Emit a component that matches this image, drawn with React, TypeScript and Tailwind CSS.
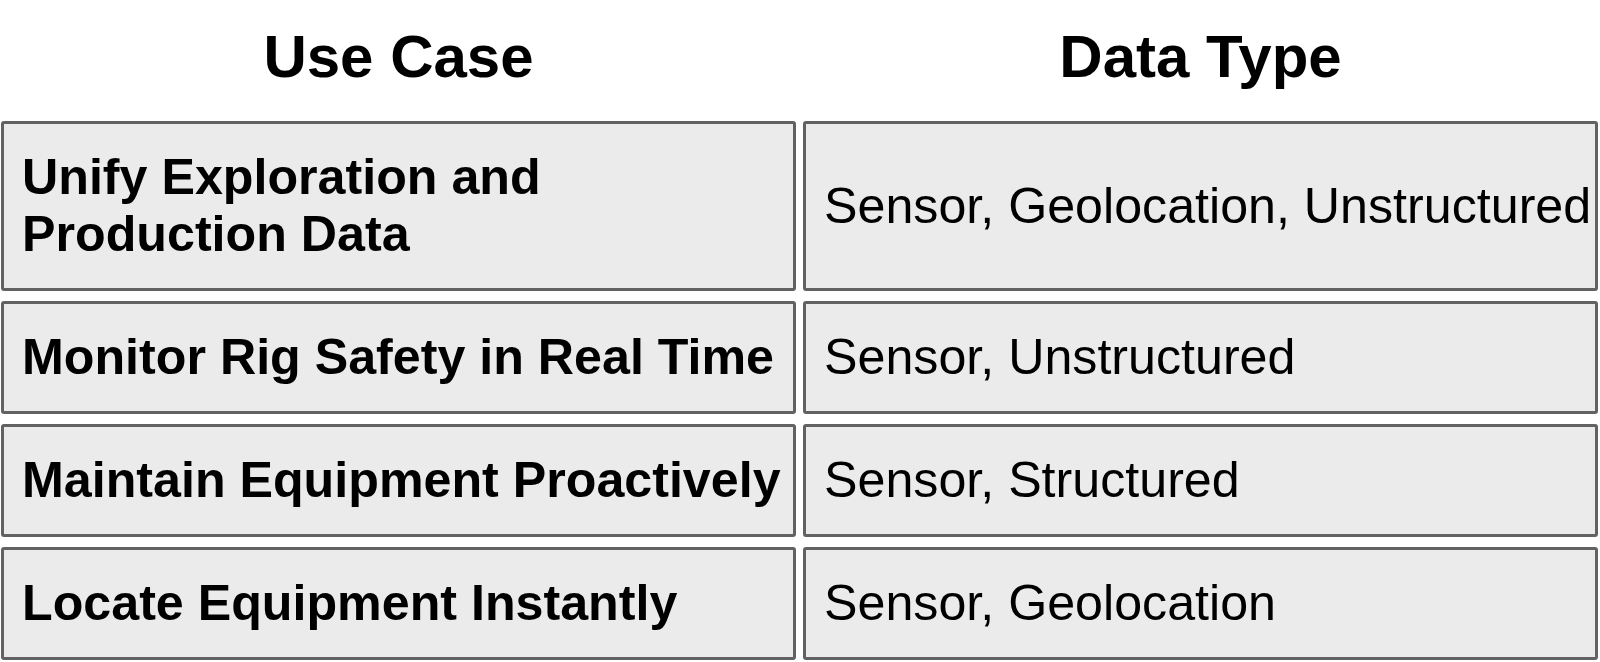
const rows = [
  { useCase: ["Unify Exploration and", "Production Data"], dataType: "Sensor, Geolocation, Unstructured", tall: true },
  { useCase: ["Monitor Rig Safety in Real Time"], dataType: "Sensor, Unstructured" },
  { useCase: ["Maintain Equipment Proactively"], dataType: "Sensor, Structured" },
  { useCase: ["Locate Equipment Instantly"], dataType: "Sensor, Geolocation" },
];

export default function App() {
  return (
    <div className="w-[1600px] h-[662px] bg-white text-black overflow-hidden font-['Liberation_Sans',Arial,sans-serif]">
      <div className="grid grid-cols-2 gap-[7px] pl-[1px] pr-[2px] h-[121px] pt-[22px]">
        <h2 className="text-center text-[60px] leading-[70px] font-bold">Use Case</h2>
        <h2 className="text-center text-[60px] leading-[70px] font-bold">Data Type</h2>
      </div>
      <div className="flex flex-col gap-[10px] pl-[1px] pr-[2px]">
        {rows.map((row) => (
          <div
            key={row.dataType + row.useCase[0]}
            className={`grid grid-cols-2 gap-[7px] ${row.tall ? "h-[170px]" : "h-[113px]"}`}
          >
            <div className="flex flex-col justify-center pl-[18px] bg-[#ebebeb] border-[3px] border-[#626262] rounded-[3px] text-[50.2px] leading-[57px] font-bold whitespace-nowrap">
              {row.useCase.map((line) => (
                <span key={line}>{line}</span>
              ))}
            </div>
            <div className="flex items-center pl-[18px] bg-[#ebebeb] border-[3px] border-[#626262] rounded-[3px] text-[50.2px] leading-[57px] whitespace-nowrap overflow-hidden">
              {row.dataType}
            </div>
          </div>
        ))}
      </div>
    </div>
  );
}
